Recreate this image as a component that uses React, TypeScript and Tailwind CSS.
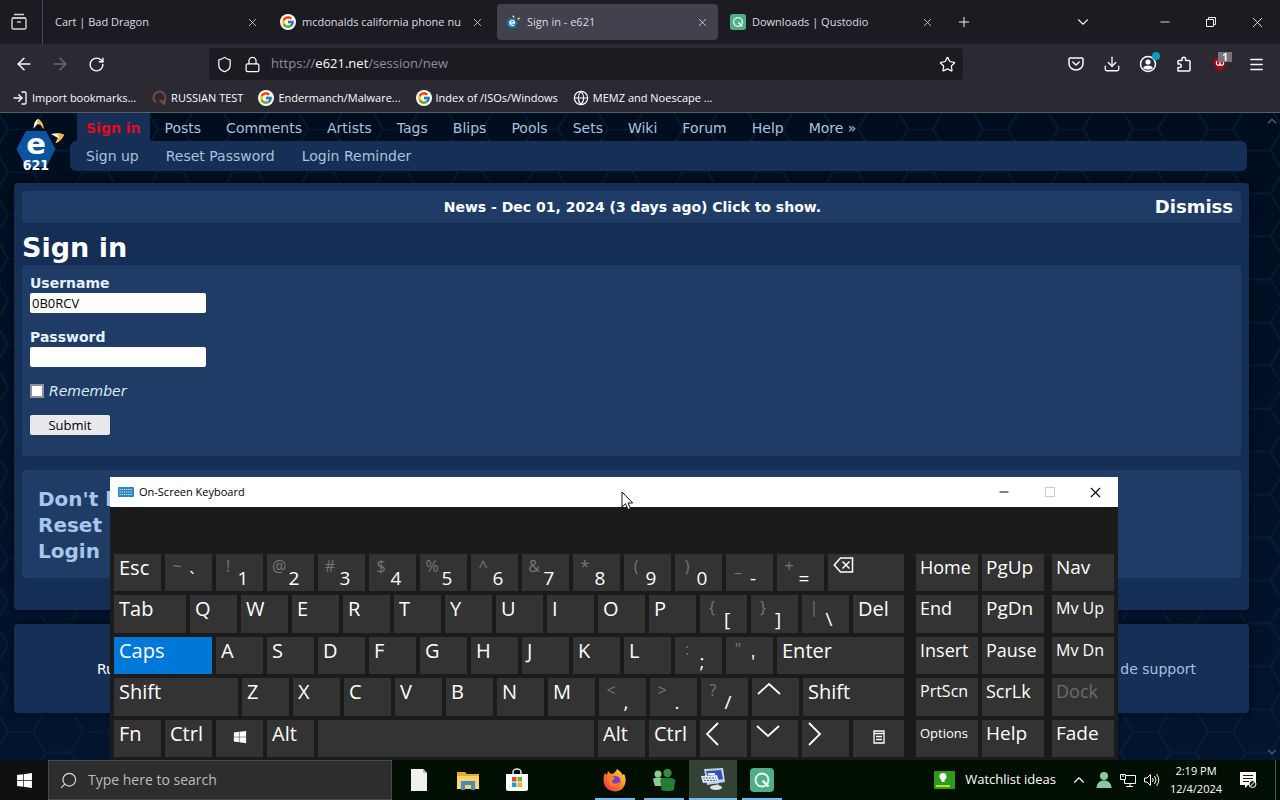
import React from "react";
import {
  ArrowLeft, ArrowRight, ChevronDown, ChevronUp, Globe, Lock, LogIn, Menu, Minus, Plus,
  RotateCw, Search, Shield, Star, X, Download,
} from "lucide-react";
import { FcGoogle } from "react-icons/fc";
import { FaWindows } from "react-icons/fa";

const ui = "font-['Open_Sans','Noto_Sans',sans-serif]";

function GoogleIcon() {
  return (
    <span className="flex size-4 shrink-0 items-center justify-center rounded-full bg-white">
      <FcGoogle className="size-3.5" />
    </span>
  );
}

function QustodioIcon({ className }: { className: string }) {
  return (
    <svg viewBox="0 0 24 24" className={className} aria-hidden="true">
      <rect width="24" height="24" rx="4" fill="#4fae87" />
      <circle cx="12" cy="12" r="6.5" fill="none" stroke="#e9fff5" strokeWidth="2" />
      <path d="M12.5 12.5l6 6" stroke="#e9fff5" strokeWidth="2.4" />
    </svg>
  );
}

function SiteLogo({ className }: { className: string }) {
  return (
    <svg viewBox="0 0 48 56" className={className} role="img" aria-label="e621">
      <path d="M10 15H30L39.500 33L30 51H10L0.500 33Z" fill="#0d549f" />
      <path d="M17.500 12.500C18 7 19.500 4 22 3C25.500 5 27.500 8 27.500 13L24.500 8.500L21.500 8Z" fill="#fff" />
      <path d="M22 3C25.500 5 27.500 8 27.500 13L24.500 8.500L21 7Z" fill="#f4b62c" />
      <path d="M35 18C40 17 45 17 48 19C46 23 43 26 39.500 27L42 22Z" fill="#fff" />
      <path d="M41 17.500C44 17 46.500 18 48 19C46 23 43 26 39.500 27L43 21Z" fill="#f4b62c" />
      <text x="20" y="38" textAnchor="middle" fontFamily="DejaVu Sans" fontWeight="700" fontSize="29" fill="#fff">e</text>
      <text x="20" y="54" textAnchor="middle" fontFamily="Liberation Sans Narrow, DejaVu Sans Condensed" fontWeight="700" fontSize="14" fill="#fff">621</text>
    </svg>
  );
}

function TabLogo() {
  return (
    <svg viewBox="0 0 16 16" className="size-4 shrink-0" aria-hidden="true">
      <path d="M4 4H10L13 9L10 14H4L1 9Z" fill="#176fae" />
      <path d="M8 1L10 3.500L7.500 3Z" fill="#fff" />
      <path d="M12 4L15.500 3.500L13.500 6.500Z" fill="#f4c62c" />
      <path d="M5 9H9.500C9.500 5.500 4.800 5.500 4.800 9C4.800 11.800 8 12 9.300 10.800" fill="none" stroke="#fff" strokeWidth="1.300" />
    </svg>
  );
}

function HexBackground() {
  return (
    <svg className="absolute inset-0 h-full w-full" aria-hidden="true">
      <defs>
        <pattern id="hex" width="75" height="43" patternUnits="userSpaceOnUse" patternTransform="translate(8 16)">
          <path d="M0 0H25L37.500 21.500L25 43M37.500 21.500H62.500L75 0M62.500 21.500L75 43" fill="none" stroke="#0a2a40" strokeOpacity="0.450" strokeWidth="2" />
        </pattern>
        <linearGradient id="sea" x1="0" y1="0" x2="0" y2="1">
          <stop offset="0" stopColor="#000d1f" />
          <stop offset="1" stopColor="#01152e" />
        </linearGradient>
      </defs>
      <rect width="100%" height="100%" fill="url(#sea)" />
      <rect width="100%" height="100%" fill="url(#hex)" />
    </svg>
  );
}

function Tab({ title, icon, active }: { title: string; icon?: React.ReactNode; active?: boolean }) {
  return (
    <div className={`flex h-9 w-[221px] min-w-0 items-center gap-1.5 rounded px-2 ${active ? "bg-[#42414d]" : ""}`}>
      {icon}
      <span className="min-w-0 flex-1 overflow-hidden whitespace-nowrap text-[11px] text-[#dcdce0]">{title}</span>
      <button aria-label={`Close ${title}`} className="flex size-4 items-center justify-center text-[#dcdce0]">
        <X size={13} strokeWidth={1.5} />
      </button>
    </div>
  );
}

function TabStrip() {
  return (
    <header className="flex h-11 items-center bg-[#1c1b22] text-[#f0f0f4]">
      <button aria-label="Recent browsing" className="flex h-11 w-[43px] items-center justify-center border-r border-[#4a4a52] pr-1">
        <svg width="18" height="18" viewBox="0 0 18 18" fill="none" stroke="#d0d0d6" strokeWidth="1.400">
          <path d="M4 1.500H14M2 5H16" />
          <rect x="2" y="5" width="14" height="11" rx="1.500" />
          <path d="M7 9H11" />
        </svg>
      </button>
      <nav aria-label="Tabs" className="ml-1 flex min-w-0 gap-1">
        <Tab title="Cart | Bad Dragon" />
        <Tab title="mcdonalds california phone nu" icon={<GoogleIcon />} />
        <Tab title="Sign in - e621" active icon={<TabLogo />} />
        <Tab title="Downloads | Qustodio" icon={<QustodioIcon className="size-4 shrink-0" />} />
      </nav>
      <button aria-label="New tab" className="ml-3 flex size-[18px] items-center justify-center"><Plus size={16} strokeWidth={1.5} /></button>
      <div className="ml-auto flex items-center">
        <button aria-label="List all tabs" className="mr-9 flex w-[46px] justify-center"><ChevronDown size={18} strokeWidth={1.5} /></button>
        <button aria-label="Minimize" className="flex w-[46px] justify-center"><Minus size={14} strokeWidth={1.5} /></button>
        <button aria-label="Restore" className="flex w-[46px] justify-center">
          <svg width="10" height="10" viewBox="0 0 10 10" fill="none" stroke="currentColor"><path d="M.5 2.500H7.500V9.500H.5ZM2.500 2.500V.5H9.500V7.500H7.500" /></svg>
        </button>
        <button aria-label="Close window" className="flex w-[46px] justify-center"><X size={17} strokeWidth={1.25} /></button>
      </div>
    </header>
  );
}

function Toolbar() {
  const cell = "flex h-9 w-9 items-center justify-center";
  return (
    <div className="flex h-10 items-center bg-[#2b2a33] px-1.5 text-[#fbfbfe]">
      <button aria-label="Back" className={cell}><ArrowLeft size={20} strokeWidth={1.75} /></button>
      <button aria-label="Forward" className={`${cell} text-[#6c6b74]`}><ArrowRight size={20} strokeWidth={1.75} /></button>
      <button aria-label="Reload" className={cell}><RotateCw size={17} strokeWidth={2} /></button>
      <div className="mx-[95px] flex h-8 min-w-0 flex-1 items-center rounded bg-[#1c1b22] px-[7px]">
        <Shield size={17} strokeWidth={1.75} className="shrink-0" />
        <Lock size={17} strokeWidth={1.75} className="ml-[11px] shrink-0" />
        <a href="https://e621.net/session/new" className="ml-2.5 min-w-0 flex-1 truncate text-[13px] text-[#8f8f9c]">
          https://<span className="text-[#fbfbfe]">e621.net</span>/session/new
        </a>
        <button aria-label="Bookmark this page"><Star size={17} strokeWidth={1.75} /></button>
      </div>
      <button aria-label="Save to Pocket" className={cell}>
        <svg width="16" height="16" viewBox="0 0 16 16" fill="none" stroke="currentColor" strokeWidth="1.500" strokeLinecap="round" strokeLinejoin="round">
          <path d="M2 2H14A1 1 0 0 1 15 3V7.500A7 6.500 0 0 1 1 7.500V3A1 1 0 0 1 2 2ZM4.800 6L8 9L11.200 6" />
        </svg>
      </button>
      <button aria-label="Downloads" className={cell}><Download size={18} strokeWidth={1.75} /></button>
      <button aria-label="Account" className={`${cell} relative`}>
        <svg width="18" height="18" viewBox="0 0 18 18" fill="currentColor">
          <circle cx="9" cy="9" r="7.500" fill="none" stroke="currentColor" strokeWidth="1.500" />
          <circle cx="9" cy="7" r="2.600" />
          <path d="M4 12.500C6 9.800 12 9.800 14 12.500C12 15.500 6 15.500 4 12.500Z" />
        </svg>
        <span className="absolute right-1.5 top-1.5 size-2 rounded-full bg-[#0c9bc4]" />
      </button>
      <button aria-label="Extensions" className={cell}>
        <svg width="16" height="16" viewBox="0 0 16 16" fill="none" stroke="currentColor" strokeWidth="1.500" strokeLinejoin="round">
          <path d="M2 15V11.500H3.500A1.700 1.700 0 0 0 3.500 8H2V5.500A1 1 0 0 1 3 4.500H6V3A1.800 1.800 0 0 1 9.600 3V4.500H13A1 1 0 0 1 14 5.500V14A1 1 0 0 1 13 15Z" />
        </svg>
      </button>
      <button aria-label="Blocker" className={`${cell} relative`}>
        <svg width="16" height="16" viewBox="0 0 16 16">
          <path d="M8 .5C10 2 12.500 2.500 14.500 2.500C14.500 9 12 13 8 15.500C4 13 1.500 9 1.500 2.500C3.500 2.500 6 2 8 .5Z" fill="#a80514" />
          <path d="M4.500 5V7.500A1.700 1.700 0 0 0 8 7.500V5V7.500A1.700 1.700 0 0 0 11.500 7.500V5" fill="none" stroke="#fff" strokeWidth="1.200" />
        </svg>
        <span className="absolute right-1.5 top-1.5 flex h-2.5 w-3.5 items-center justify-center bg-[#74747a] text-[10px] font-bold leading-none">1</span>
      </button>
      <button aria-label="Menu" className={cell}><Menu size={17} strokeWidth={2} /></button>
    </div>
  );
}

const bookmarks = [
  { label: "Import bookmarks...", icon: <LogIn size={16} strokeWidth={2} /> },
  {
    label: "RUSSIAN TEST",
    icon: (
      <svg width="16" height="16" viewBox="0 0 16 16" fill="none" stroke="#7a4a40" strokeWidth="2">
        <path d="M5 12.500A6 6 0 1 1 13 11.500L14 14.500M9 10L13.500 14.500" />
      </svg>
    ),
  },
  { label: "Endermanch/Malware...", icon: <GoogleIcon /> },
  { label: "Index of /ISOs/Windows", icon: <GoogleIcon /> },
  { label: "MEMZ and Noescape ...", icon: <Globe size={16} strokeWidth={1.75} /> },
];

function Bookmarks() {
  return (
    <nav aria-label="Bookmarks" className="flex h-[29px] items-center gap-[15px] border-b border-[#53616d] bg-[#2b2a33] px-3 text-[11px] text-[#fbfbfe]">
      {bookmarks.map((b) => (
        <a key={b.label} href="#" className="flex items-center gap-1 whitespace-nowrap">
          {b.icon}
          {b.label}
        </a>
      ))}
    </nav>
  );
}

const links = ["Posts", "Comments", "Artists", "Tags", "Blips", "Pools", "Sets", "Wiki", "Forum", "Help", "More »"];

function SiteHeader() {
  return (
    <div className="flex">
      <a href="#" className="w-[70px] shrink-0 pl-4 pt-[3px]"><SiteLogo className="h-14 w-12" /></a>
      <div className="min-w-0 flex-1">
        <nav aria-label="Main" className="flex h-7 items-center gap-[5px] pl-[7px] text-[#a9c1dc]">
          <a href="#" className="flex h-7 items-center bg-[#152f56] px-[9px] pt-0.5 font-bold text-[#e40a1c]">Sign in</a>
          {links.map((l) => <a key={l} href="#" className="whitespace-nowrap px-2.5 pt-0.5">{l}</a>)}
        </nav>
        <nav aria-label="Session" className="flex h-[30px] items-center gap-[27px] rounded-md bg-[#152f56] px-4 text-[#a9c1dc]">
          <a href="#">Sign up</a>
          <a href="#">Reset Password</a>
          <a href="#">Login Reminder</a>
        </nav>
      </div>
    </div>
  );
}

function Site() {
  return (
    <main className="relative flex flex-1 overflow-hidden bg-[#000f22] font-['DejaVu_Sans',Verdana,sans-serif] text-sm text-white">
      <HexBackground />
      <div className="relative flex min-w-0 flex-1 flex-col pr-[17px]">
        <SiteHeader />
        <div className="-mr-0.5 ml-3.5 mt-[11px] rounded bg-[#142e56] px-2 pb-8 pt-2 shadow-[0_0_4px_3px_#00000055]">
          <section className="flex h-8 items-center rounded bg-[#1f3c67] px-2 font-bold">
            <p className="flex-1 pl-20 text-center">News - Dec 01, 2024 (3 days ago) Click to show.</p>
            <button className="text-lg font-bold">Dismiss</button>
          </section>
          <h1 className="mt-2 text-[27px] font-bold leading-[34px]">Sign in</h1>
          <form className="flex h-[191px] flex-col items-start rounded bg-[#1f3c67] p-2" onSubmit={(e) => e.preventDefault()}>
            <label htmlFor="name" className="font-bold leading-5 text-[#e6f1fb]">Username</label>
            <input id="name" defaultValue="0B0RCV" className="h-5 w-44 rounded-xs border-0 bg-white px-0.5 font-['Open_Sans',sans-serif] text-[13px] text-black" />
            <label htmlFor="password" className="mt-3.5 font-bold leading-5 text-[#e6f1fb]">Password</label>
            <input id="password" type="password" className="h-5 w-44 rounded-xs border-0 bg-white px-0.5 text-black" />
            <div className="mt-3.5 flex items-center gap-[5px]">
              <input id="remember" type="checkbox" className="size-3.5 appearance-none border-2 border-[#8f8f9d] bg-white" />
              <label htmlFor="remember" className="italic leading-5 text-[#dceaf8]">Remember</label>
            </div>
            <button type="submit" className="mt-3.5 h-5 w-20 rounded-xs bg-[#e9e9ed] font-['Open_Sans',sans-serif] text-[13px] leading-5 text-black">Submit</button>
          </form>
          <section className="mt-3.5 flex flex-col rounded bg-[#1f3c67] px-4 pb-3.5 pt-4 text-xl font-bold leading-[26px] text-[#a8c6ea]">
            <a href="#">Don't h</a>
            <a href="#">Reset</a>
            <a href="#">Login</a>
          </section>
        </div>
        <footer className="-mr-0.5 ml-3.5 mt-3.5 flex h-[89px] items-center justify-between rounded bg-[#152f56] pl-[83px] pr-[53px] shadow-[0_0_4px_3px_#00000055]">
          <span>Ru</span>
          <a href="#" className="text-[#a9c1dc]">de support</a>
        </footer>
      </div>
      <div className="relative flex w-4 flex-col items-center justify-between py-px text-[#4c5b66]" aria-hidden="true">
        <ChevronUp size={14} strokeWidth={2.5} />
        <ChevronDown size={14} strokeWidth={2.5} />
      </div>
    </main>
  );
}

type KeyDef = { t?: string; s?: string; w?: string; cls?: string; icon?: React.ReactNode; label?: string };

const arrow = (d: string) => (
  <svg width="24" height="26" viewBox="0 0 24 26" fill="none" stroke="#fff" strokeWidth="1.800"><path d={d} /></svg>
);
const letters = (s: string): KeyDef[] => s.split("").map((t) => ({ t }));

const rows: KeyDef[][] = [
  [
    { t: "Esc" }, { s: "~", t: "`" }, { s: "!", t: "1" }, { s: "@", t: "2" }, { s: "#", t: "3" }, { s: "$", t: "4" },
    { s: "%", t: "5" }, { s: "^", t: "6" }, { s: "&", t: "7" }, { s: "*", t: "8" }, { s: "(", t: "9" }, { s: ")", t: "0" },
    { s: "_", t: "-" }, { s: "+", t: "=" },
    {
      label: "Backspace", w: "flex-1", cls: "pt-0.5",
      icon: (
        <svg width="21" height="18" viewBox="0 0 20 18" fill="none" stroke="#fff" strokeWidth="1.500">
          <path d="M7 2H19V16H7L.800 9ZM9 5.500L16 12.500M16 5.500L9 12.500" />
        </svg>
      ),
    },
  ],
  [{ t: "Tab", w: "w-[72px]" }, ...letters("QWERTYUIOP"), { s: "{", t: "[" }, { s: "}", t: "]" }, { s: "|", t: "\\" }, { t: "Del", w: "flex-1" }],
  [{ t: "Caps", w: "w-[98px]", cls: "bg-[#0078d7]" }, ...letters("ASDFGHJKL"), { s: ":", t: ";" }, { s: '"', t: "'" }, { t: "Enter", w: "flex-1" }],
  [
    { t: "Shift", w: "w-[124px]" }, ...letters("ZXCVBNM"), { s: "<", t: "," }, { s: ">", t: "." }, { s: "?", t: "/" },
    { label: "Up", icon: arrow("M1 16L12 6L23 16") }, { t: "Shift", w: "flex-1" },
  ],
  [
    { t: "Fn" }, { t: "Ctrl" },
    { label: "Windows", cls: "justify-center pr-[5px] pt-2.5", icon: <FaWindows size={14} /> },
    { t: "Alt" }, { label: "Space", w: "flex-1" }, { t: "Alt" }, { t: "Ctrl" },
    { label: "Left", icon: arrow("M13 3L2 14L13 25") }, { label: "Down", icon: arrow("M1 6L12 16L23 6") }, { label: "Right", icon: arrow("M2 3L13 14L2 25") },
    {
      label: "Context menu", w: "w-[51px]", cls: "justify-center pr-[5px] pt-2.5",
      icon: (
        <svg width="12" height="14" viewBox="0 0 12 14" fill="none" stroke="#fff" strokeWidth="1.300"><path d="M1 1H11V13H1ZM1 3.500H11M3 6.500H9M3 9.500H9" /></svg>
      ),
    },
  ],
];

const sideRows: { t: string; cls: string }[][] = [
  [{ t: "Home", cls: "text-lg" }, { t: "PgUp", cls: "text-[19px]" }, { t: "Nav", cls: "text-[19px]" }],
  [{ t: "End", cls: "text-lg" }, { t: "PgDn", cls: "text-[19px]" }, { t: "Mv Up", cls: "text-base" }],
  [{ t: "Insert", cls: "text-lg" }, { t: "Pause", cls: "text-lg" }, { t: "Mv Dn", cls: "text-base" }],
  [{ t: "PrtScn", cls: "text-base" }, { t: "ScrLk", cls: "text-lg" }, { t: "Dock", cls: "text-lg" }],
  [{ t: "Options", cls: "text-[13px]" }, { t: "Help", cls: "text-[19px]" }, { t: "Fade", cls: "text-[19px]" }],
];

function Key({ t, s, w = "w-[47px]", cls = "", icon, label }: KeyDef) {
  const bg = cls.includes("bg-") ? "" : "bg-[#333333]";
  return (
    <button aria-label={label} className={`flex items-start overflow-hidden pl-[5px] text-xl leading-[27px] text-white ${w} ${bg} ${cls}`}>
      {s && <span className="w-3.5 shrink-0 text-base leading-6 text-[#777777]">{s}</span>}
      {t && <span className={s ? "mt-[11px] w-4 text-center text-[19px] leading-[27px]" : ""}>{t}</span>}
      {icon}
    </button>
  );
}

function OnScreenKeyboard() {
  return (
    <section aria-label="On-Screen Keyboard" className={`absolute bottom-10 left-[110px] flex h-[283px] w-[1008px] flex-col bg-[#1b1b1b] ${ui}`}>
      <div className="flex h-[30px] items-center bg-white pl-2 text-[11px] text-black">
        <svg width="16" height="10" viewBox="0 0 16 10" aria-hidden="true">
          <rect width="16" height="10" rx="1" fill="#2f86c0" />
          <path d="M1.500 2.500H14.500M1.500 5H14.500M1.500 7.500H14.500" stroke="#d7ecf8" strokeDasharray="1.200 1" />
        </svg>
        <span className="ml-[5px] flex-1">On-Screen Keyboard</span>
        <button aria-label="Minimize keyboard" className="flex w-[46px] justify-center"><Minus size={14} strokeWidth={1.75} /></button>
        <button aria-label="Maximize keyboard" disabled className="flex w-[45px] justify-center"><span className="size-2.5 border border-[#cccccc]" /></button>
        <button aria-label="Close keyboard" className="flex w-[46px] justify-center"><X size={17} strokeWidth={1.5} /></button>
      </div>
      <div className="mt-auto flex h-[206px] gap-3 px-1 pb-[3px]">
        <div className="flex min-w-0 flex-1 flex-col gap-1">
          {rows.map((row, i) => (
            <div key={i} className="flex min-h-0 flex-1 gap-1">
              {row.map((k, j) => <Key key={j} {...k} />)}
            </div>
          ))}
        </div>
        <div className="flex flex-col gap-1">
          {sideRows.map((row, i) => (
            <div key={i} className="flex min-h-0 flex-1 gap-1">
              {row.map((k, j) => (
                <button key={k.t} className={`flex w-[62px] items-start overflow-hidden whitespace-nowrap bg-[#333333] pl-1 ${k.cls} ${j === 2 ? "ml-1" : ""} ${k.t === "Dock" ? "text-[#6b6b6b]" : "text-white"}`}>
                  <span className="leading-[27px]">{k.t}</span>
                </button>
              ))}
            </div>
          ))}
        </div>
      </div>
      <svg width="13" height="20" viewBox="0 0 13 20" className="absolute left-[511px] top-3.5" aria-hidden="true">
        <path d="M1 1V16L4.500 12.800L7 18.500L9.500 17.500L7 12H11.700Z" fill="#fff" stroke="#111" />
      </svg>
    </section>
  );
}

function PersonIcon({ className }: { className: string }) {
  return (
    <svg viewBox="0 0 16 18" className={className} aria-hidden="true">
      <circle cx="8" cy="5" r="4" fill="#8cc79a" />
      <path d="M.5 17C.5 12 4 9.500 8 9.500S15.500 12 15.500 17Z" fill="#8cc79a" />
    </svg>
  );
}

function Taskbar() {
  const app = "flex h-10 w-12 items-center justify-center";
  const open = "mx-1 flex h-10 w-10 items-center justify-center border-b-2 border-[#76b9ed] pt-0.5";
  return (
    <footer className="relative flex h-10 items-stretch bg-[#010e02] text-white">
      <button aria-label="Start" className="flex w-12 items-center justify-center bg-[#101010]"><FaWindows size={17} /></button>
      <label className="flex w-[344px] items-center gap-2.5 border border-[#4a4a4a] bg-[#2d2d2d] pl-2.5">
        <Search size={19} strokeWidth={1.5} className="-scale-x-100 shrink-0 text-[#d8d8d8]" />
        <input aria-label="Search" placeholder="Type here to search" className="min-w-0 flex-1 bg-transparent text-sm text-white outline-none placeholder:text-[#bcbcbc]" />
      </label>
      <div className="ml-[3px] flex">
        <button aria-label="Document" className={app}>
          <svg width="16" height="22" viewBox="0 0 16 22"><path d="M0 0H12L16 4V22H0Z" fill="#eef2ea" /><path d="M12 0V4H16Z" fill="#b7bdb3" /></svg>
        </button>
        <button aria-label="File Explorer" className={`${app} w-[50px]`}>
          <svg width="22" height="19" viewBox="0 0 22 19"><path d="M0 1H8L10 3H22V18H0Z" fill="#e0ac34" /><path d="M0 5H22V18H0Z" fill="#fbd36c" /><path d="M4 10H18V19H14V14H8V19H4Z" fill="#4a88bd" /></svg>
        </button>
        <button aria-label="Microsoft Store" className={app}>
          <svg width="24" height="24" viewBox="0 0 24 24"><path d="M8 7V4A4 3 0 0 1 16 4V7" fill="none" stroke="#dfe8ee" strokeWidth="1.500" /><path d="M1 6H23V21A2 2 0 0 1 21 23H3A2 2 0 0 1 1 21Z" fill="#fff" /><path d="M7 9H11.500V13.500H7Z" fill="#e04a2a" /><path d="M12.500 9H17V13.500H12.500Z" fill="#7dab2d" /><path d="M7 14.500H11.500V19H7Z" fill="#2b9bd8" /><path d="M12.500 14.500H17V19H12.500Z" fill="#e9b32c" /></svg>
        </button>
      </div>
      <div className="ml-[50px] flex gap-px">
        <button aria-label="Firefox" className={open}>
          <svg width="24" height="24" viewBox="0 0 24 24">
            <defs><linearGradient id="fox" x1="1" y1="0" x2="0" y2="1"><stop offset="0" stopColor="#ffe14a" /><stop offset=".45" stopColor="#ff8a23" /><stop offset="1" stopColor="#ee2358" /></linearGradient></defs>
            <path d="M2 5L4 7L5 3L8 6C10 6 12 5 14 1C17 3 19 5 19.500 7L21 6C24 11 23 18 18.500 21.500C13 25 5 23.500 2 18C0 14 0 9 2 5Z" fill="url(#fox)" />
            <circle cx="12.500" cy="13" r="5" fill="#7540c8" />
            <path d="M5 9C8 7 10 9 12 9.500L10 12C8 13 9 15 11 15.500C13 16 15 15 17 14C16 19 8 20 6 15Z" fill="#ff7d24" />
          </svg>
        </button>
        <button aria-label="People" className={open}>
          <svg width="24" height="24" viewBox="0 0 24 24">
            <circle cx="6" cy="6" r="3.500" fill="#8ccc92" />
            <path d="M1 11C3 9 9 9 11 11L10 15L9 18H3L2 15Z" fill="#8ccc92" />
            <circle cx="15.500" cy="5" r="4.200" fill="#338a41" />
            <path d="M8 12C10 9 21 9 23.500 12L22.500 17L22 22C19 23.500 12 23.500 9.500 22L9 17Z" fill="#257c34" />
          </svg>
        </button>
        <button aria-label="On-Screen Keyboard" className={`${app} border-b-2 border-[#76b9ed] bg-[#344135]`}>
          <svg width="25" height="23" viewBox="0 0 25 23"><path d="M3 1L22 0L24 14L6 17Z" fill="#c6d2e4" /><path d="M5 3L20 2L22 11L8 14Z" fill="#2855bd" /><path d="M7 5H14V7H7Z" fill="#dfe8fa" /><path d="M0 8L16 7L18 13L2 15Z" fill="#e5ebf5" /><path d="M2 10H15M3 12.500H16" stroke="#4167b4" strokeDasharray="2 1" /><path d="M13 15L17 15L18 18Z" fill="#9aa6b5" /><ellipse cx="15" cy="19.500" rx="6" ry="2.500" fill="#dbe1e8" /></svg>
        </button>
        <button aria-label="Qustodio" className={open}><QustodioIcon className="size-6" /></button>
      </div>
      <div className="ml-auto flex items-center">
        <a href="#" className="flex items-center gap-2.5 text-[13px]">
          <svg width="21" height="18" viewBox="0 0 21 18" aria-hidden="true"><rect width="21" height="18" rx="1" fill="#2d9b1c" /><circle cx="9" cy="5.500" r="3.500" fill="#fff" /><path d="M7.500 8H10.500V11H7.500Z" fill="#fff" /><path d="M2 14H16V16H2Z" fill="#b9e815" /></svg>
          Watchlist ideas
        </a>
        <ChevronUp size={18} strokeWidth={1.5} className="ml-3.5" />
        <PersonIcon className="ml-2 h-[18px] w-4" />
        <svg width="16" height="14" viewBox="0 0 16 14" className="ml-2" fill="none" stroke="#fff" aria-hidden="true"><path d="M6 2.500H15.500V10.500H4.500V7M.5 1.500H5.500V6.500H.5ZM3 1.500V4M10 10.500V13M6 13.500H13" /></svg>
        <svg width="16" height="14" viewBox="0 0 16 14" className="ml-2" fill="none" stroke="#fff" aria-hidden="true"><path d="M.5 5V9H3L6.500 12.500V1.500L3 5ZM8.500 5Q10 7 8.500 9M10.500 3Q13.500 7 10.500 11M12.500 1Q17 7 12.500 13" /></svg>
        <time className="ml-2 flex w-14 flex-col items-center whitespace-nowrap text-[11px] leading-[18px]"><span>2:19 PM</span><span>12/4/2024</span></time>
        <svg width="17" height="17" viewBox="0 0 17 17" className="ml-4" aria-hidden="true"><path d="M0 0H16V13H8L5 16V13H0Z" fill="#fff" /><path d="M3 3.500H13M3 6.500H13M3 9.500H9" stroke="#132013" /><circle cx="12.500" cy="12" r="3.500" fill="#132013" stroke="#fff" /><path d="M10 14.500L15 9.500" stroke="#fff" /></svg>
        <span className="ml-[18px] mr-1 h-10 w-px bg-[#4c554c]" />
      </div>
    </footer>
  );
}

export default function App() {
  return (
    <div className={`relative flex min-h-screen flex-col ${ui}`}>
      <TabStrip />
      <Toolbar />
      <Bookmarks />
      <Site />
      <OnScreenKeyboard />
      <Taskbar />
    </div>
  );
}
